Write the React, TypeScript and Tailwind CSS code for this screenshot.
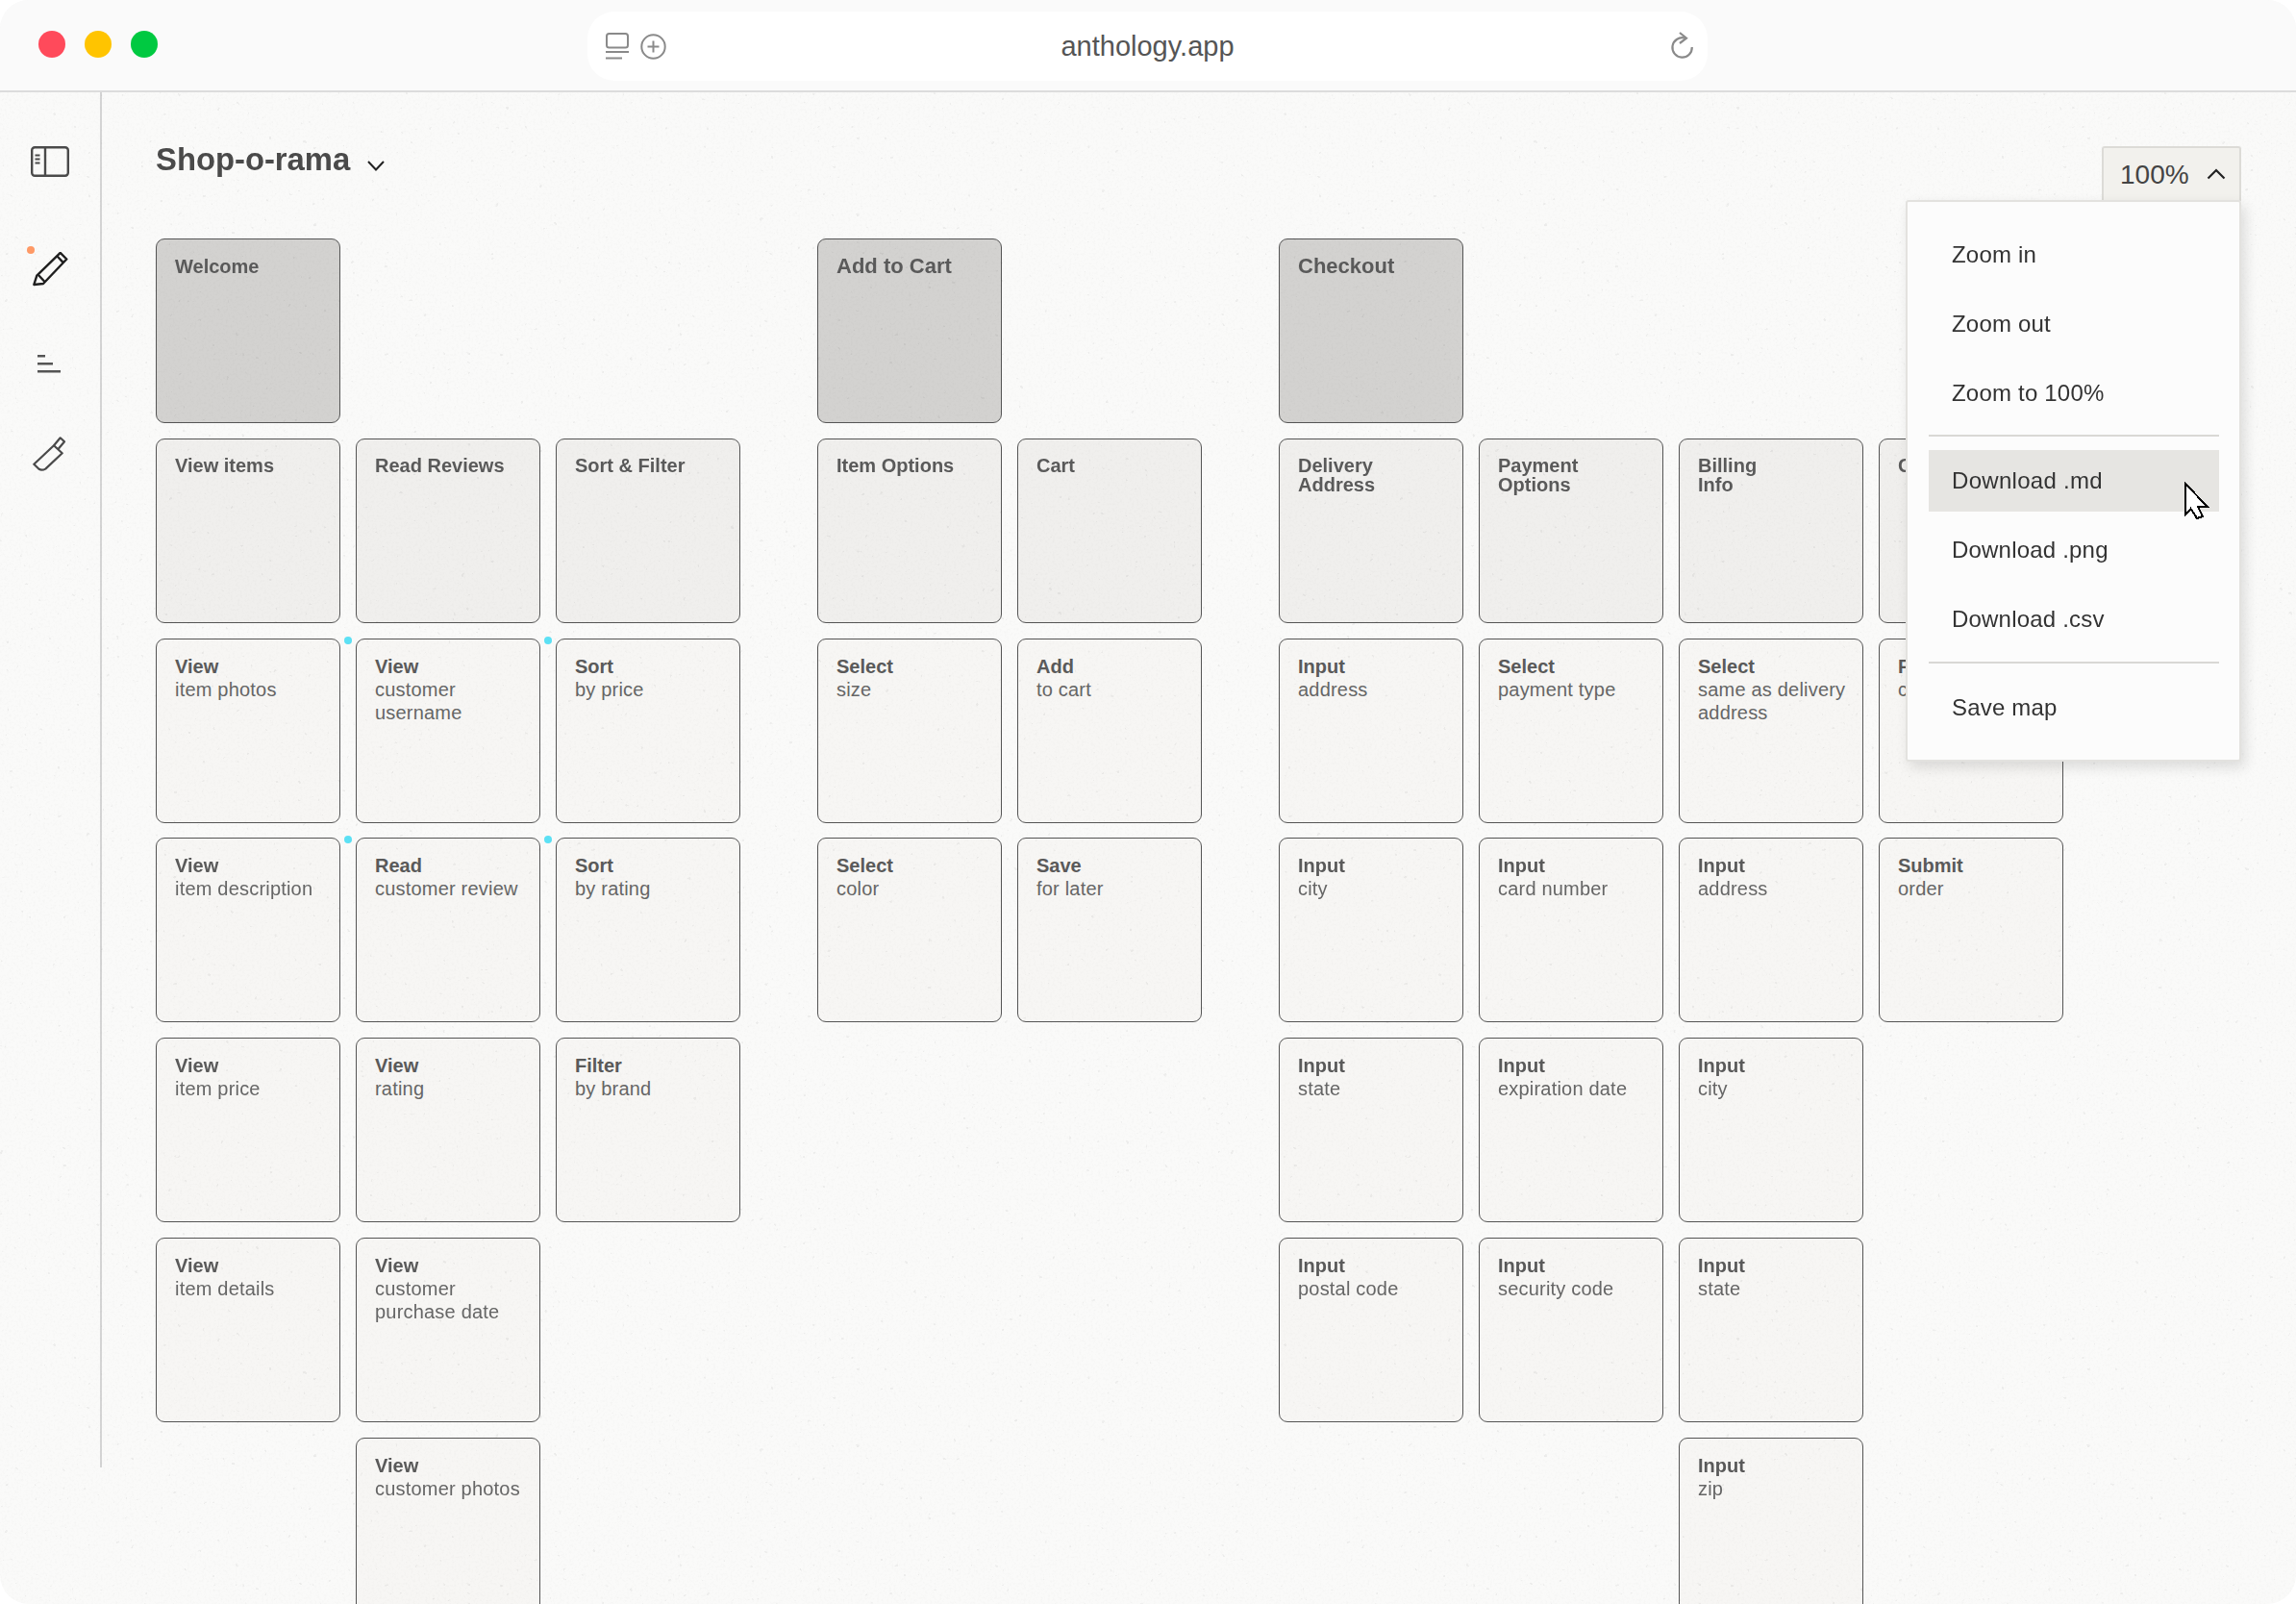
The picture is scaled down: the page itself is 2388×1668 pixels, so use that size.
import React from "react";

type Item = { title: string; lines?: string[]; dot?: boolean };
type Section = { title: string; large?: boolean; columns: { group: string[]; items: Item[] }[] };

const sections: Section[] = [
  {
    title: "Welcome",
    columns: [
      {
        group: ["View items"],
        items: [
          { title: "View", lines: ["item photos"] },
          { title: "View", lines: ["item description"] },
          { title: "View", lines: ["item price"] },
          { title: "View", lines: ["item details"] },
        ],
      },
      {
        group: ["Read Reviews"],
        items: [
          { title: "View", lines: ["customer", "username"], dot: true },
          { title: "Read", lines: ["customer review"], dot: true },
          { title: "View", lines: ["rating"] },
          { title: "View", lines: ["customer", "purchase date"] },
          { title: "View", lines: ["customer photos"] },
        ],
      },
      {
        group: ["Sort & Filter"],
        items: [
          { title: "Sort", lines: ["by price"], dot: true },
          { title: "Sort", lines: ["by rating"], dot: true },
          { title: "Filter", lines: ["by brand"] },
        ],
      },
    ],
  },
  {
    title: "Add to Cart",
    large: true,
    columns: [
      {
        group: ["Item Options"],
        items: [
          { title: "Select", lines: ["size"] },
          { title: "Select", lines: ["color"] },
        ],
      },
      {
        group: ["Cart"],
        items: [
          { title: "Add", lines: ["to cart"] },
          { title: "Save", lines: ["for later"] },
        ],
      },
    ],
  },
  {
    title: "Checkout",
    large: true,
    columns: [
      {
        group: ["Delivery", "Address"],
        items: [
          { title: "Input", lines: ["address"] },
          { title: "Input", lines: ["city"] },
          { title: "Input", lines: ["state"] },
          { title: "Input", lines: ["postal code"] },
        ],
      },
      {
        group: ["Payment", "Options"],
        items: [
          { title: "Select", lines: ["payment type"] },
          { title: "Input", lines: ["card number"] },
          { title: "Input", lines: ["expiration date"] },
          { title: "Input", lines: ["security code"] },
        ],
      },
      {
        group: ["Billing", "Info"],
        items: [
          { title: "Select", lines: ["same as delivery", "address"] },
          { title: "Input", lines: ["address"] },
          { title: "Input", lines: ["city"] },
          { title: "Input", lines: ["state"] },
          { title: "Input", lines: ["zip"] },
        ],
      },
      {
        group: ["Confirm"],
        items: [
          { title: "Finalize", lines: ["checkout"] },
          { title: "Submit", lines: ["order"] },
        ],
      },
    ],
  },
];

function SectionCard({ title, large }: { title: string; large?: boolean }) {
  return (
    <div className="h-[192px] w-[192px] rounded-[9px] border border-[#555] bg-[#d3d2d0] px-[19px] pt-[15px]">
      <div className={large ? "text-[22px] leading-[26px] font-bold text-[#5a5a5a]" : "text-[20px] leading-[26px] font-bold text-[#5a5a5a]"}>
        {title}
      </div>
    </div>
  );
}

function GroupCard({ lines }: { lines: string[] }) {
  return (
    <div className="h-[192px] w-[192px] rounded-[9px] border border-[#555] bg-[#f0efed] px-[19px] pt-[17px]">
      {lines.map((l) => (
        <div key={l} className="text-[20px] leading-[20px] font-bold text-[#5a5a5a]">
          {l}
        </div>
      ))}
    </div>
  );
}

function ItemCard({ item }: { item: Item }) {
  return (
    <div className="relative h-[192px] w-[192px] rounded-[9px] border border-[#555] bg-[#f7f6f4] px-[19px] pt-[16px] text-[20px] leading-[24px] text-[#666]">
      {item.dot && <div className="absolute -top-[3px] -left-[13px] h-2 w-2 rounded-full bg-[#5ce1f5]" />}
      <div className="font-bold text-[#5a5a5a]">{item.title}</div>
      {item.lines?.map((l) => (
        <div key={l} className="whitespace-nowrap tracking-[0.2px]">
          {l}
        </div>
      ))}
    </div>
  );
}

function PanelIcon() {
  return (
    <svg width="40" height="32" viewBox="0 0 40 32" fill="none" stroke="#4a4a4a" strokeWidth="2.4">
      <rect x="1.2" y="1.2" width="37.6" height="29.6" rx="3" />
      <path d="M15 1v30" />
      <path d="M4.5 9.5h5M4.5 13.5h5M4.5 17.5h5" strokeWidth="2" />
    </svg>
  );
}

function PencilIcon() {
  return (
    <svg width="40" height="36" viewBox="0 0 40 36" fill="none" stroke="#1f1f1f" strokeWidth="2.4" strokeLinejoin="round">
      <path d="M3.3 34L6.3 24.7L30.7.9L37.3 7.500L13 33Z" />
      <path d="M27.3 4.200L33.600 10.900" />
      <path d="M8 24l6.500 7" />
    </svg>
  );
}

function LinesIcon() {
  return (
    <svg width="40" height="22" viewBox="0 0 40 22" fill="none" stroke="#555" strokeWidth="2.4">
      <path d="M7 2.3h8M7 10.3h16M7 18.3h24" />
    </svg>
  );
}

function KnifeIcon() {
  return (
    <svg width="40" height="36" viewBox="0 0 40 36" fill="none" stroke="#4a4a4a" strokeWidth="2.2" strokeLinejoin="round">
      <path d="M3.3 28.7L24 9.3L32.7 17.3L15.3 33.6Q11.5 35.6 8.5 33.8Z" />
      <path d="M24 9.3L30.7 1.3L35 5.3L28.5 13" />
    </svg>
  );
}

function TabsIcon() {
  return (
    <svg width="24" height="28" viewBox="0 0 24 28" fill="none" stroke="#8a8a8a" strokeWidth="2">
      <rect x="1" y="1" width="22" height="14.500" rx="2.500" />
      <path d="M0 20h24M0 26.500h17" />
    </svg>
  );
}

function PlusCircleIcon() {
  return (
    <svg width="27" height="27" viewBox="0 0 27 27" fill="none" stroke="#8a8a8a" strokeWidth="2">
      <circle cx="13.5" cy="13.5" r="12.2" />
      <path d="M13.5 7.500v12M7.500 13.500h12" />
    </svg>
  );
}

function ReloadIcon() {
  return (
    <svg width="26" height="30" viewBox="0 0 26 30" fill="none" stroke="#8a8a8a" strokeWidth="2.2">
      <path d="M15 6.500A10.200 10.200 0 1 0 22.800 16" />
      <path d="M10 1L17 6.700L10 12" />
    </svg>
  );
}

function MenuItem({ label, active }: { label: string; active?: boolean }) {
  return (
    <div className={active ? "flex h-16 items-center bg-[#e6e5e2] pl-6 tracking-[0.3px]" : "flex h-16 items-center pl-6"}>
      {label}
    </div>
  );
}

export default function App() {
  return (
    <div className="relative h-[1668px] w-[2388px] overflow-hidden rounded-[30px] bg-[#fafaf9] font-['Liberation_Sans',Arial,sans-serif]">
      {/* title bar */}
      <div className="flex h-[96px] items-center border-b-2 border-[#dcdcdc] bg-[#fafafa] pl-10">
        <div className="flex w-[571px] gap-5 pb-[2px]">
          <div className="h-7 w-7 rounded-full bg-[#ff4a5b]" />
          <div className="h-7 w-7 rounded-full bg-[#ffc400]" />
          <div className="h-7 w-7 rounded-full bg-[#00c941]" />
        </div>
        <div className="mt-[2px] grid h-[72px] w-[1165px] grid-cols-[1fr_auto_1fr] items-center rounded-[28px] bg-white px-[19px]">
          <div className="flex items-center gap-3">
            <TabsIcon />
            <PlusCircleIcon />
          </div>
          <div className="pt-[2px] text-[29px] text-[#555]">anthology.app</div>
          <div className="-mr-[6px] flex justify-end">
            <ReloadIcon />
          </div>
        </div>
      </div>

      <div className="flex">
        {/* sidebar */}
        <div className="h-[1430px] w-[106px] shrink-0 border-r-2 border-[#d4d4d4] pt-14 pl-8">
          <PanelIcon />
          <div className="relative mt-[78px]">
            <div className="absolute -top-[6px] -left-1 h-2 w-2 rounded-full bg-[#ff9a66]" />
            <PencilIcon />
          </div>
          <div className="mt-[70px]">
            <LinesIcon />
          </div>
          <div className="mt-16">
            <KnifeIcon />
          </div>
        </div>

        {/* canvas */}
        <div className="pt-[46px] pl-[56px]">
          <div className="mb-[58px] flex h-12 items-center gap-[18px]">
            <div className="text-[32.8px] font-bold text-[#4a4a4a]">Shop-o-rama</div>
            <svg className="mt-[12px]" width="18" height="11" viewBox="0 0 18 11" fill="none" stroke="#222" strokeWidth="2">
              <path d="M1 1l8 8.500L17 1" />
            </svg>
          </div>
          <div className="flex gap-20">
            {sections.map((s) => (
              <div key={s.title} className="flex flex-col gap-[15.8px]">
                <SectionCard title={s.title} large={s.large} />
                <div className="flex gap-4">
                  {s.columns.map((c) => (
                    <div key={c.group[0]} className="flex flex-col gap-[15.8px]">
                      <GroupCard lines={c.group} />
                      {c.items.map((item, i) => (
                        <ItemCard key={i} item={item} />
                      ))}
                    </div>
                  ))}
                </div>
              </div>
            ))}
          </div>
        </div>
      </div>

      {/* paper grain lies over the canvas and the cards */}
      <svg className="pointer-events-none absolute top-[96px] left-0 mix-blend-multiply" width="2388" height="1572">
        <filter id="grain" x="0" y="0" width="100%" height="100%">
          <feTurbulence type="fractalNoise" baseFrequency="0.4" numOctaves="3" seed="4" />
          <feColorMatrix values="0 0 0 0 0.6  0 0 0 0 0.6  0 0 0 0 0.59  2 0 0 0 -0.9" />
        </filter>
        <filter id="specks" x="0" y="0" width="100%" height="100%">
          <feTurbulence type="fractalNoise" baseFrequency="0.2" numOctaves="2" seed="11" />
          <feColorMatrix values="0 0 0 0 0.5  0 0 0 0 0.5  0 0 0 0 0.5  16 0 0 0 -12.2" />
        </filter>
        <rect width="2388" height="1572" filter="url(#grain)" opacity="0.1" />
        <rect width="2388" height="1572" filter="url(#specks)" opacity="0.18" />
      </svg>

      {/* zoom control */}
      <div className="absolute top-[152px] right-[57px] flex h-[57px] w-[145px] items-center gap-[18px] rounded-t-[3px] border-2 border-b-0 border-[#dcdbd7] bg-[#f2f1ed] pl-[17px] text-[28px] text-[#444]">
        100%
        <svg className="mb-[2px]" width="20" height="12" viewBox="0 0 20 12" fill="none" stroke="#222" strokeWidth="2.200">
          <path d="M1.500 10.500L10 2l8.500 8.500" />
        </svg>
      </div>

      {/* zoom menu */}
      <div className="absolute top-[208px] right-[57px] h-[584px] w-[349px] rounded-[3px] border-2 border-[#e3e2df] bg-[#fcfcfc] pt-[23px] pr-[21px] pl-[22px] text-[24px] tracking-[0.2px] text-[#333] shadow-[4px_6px_14px_rgba(0,0,0,0.12)]">
        <div className="flex flex-col gap-2">
          <MenuItem label="Zoom in" />
          <MenuItem label="Zoom out" />
          <MenuItem label="Zoom to 100%" />
        </div>
        <div className="mt-[11px] mb-[14px] h-0.5 bg-[#d9d8d5]" />
        <div className="flex flex-col gap-2">
          <MenuItem label="Download .md" active />
          <MenuItem label="Download .png" />
          <MenuItem label="Download .csv" />
        </div>
        <div className="mt-3 mb-[14px] h-0.5 bg-[#d9d8d5]" />
        <MenuItem label="Save map" />
      </div>

      {/* mouse pointer */}
      <svg className="absolute top-[500px] left-[2270px]" width="30" height="42" viewBox="0 0 30 42" shapeRendering="crispEdges">
        <path d="M3 3V35L8.500 29L15 39L21 37L16 27H26Z" fill="#fff" stroke="#000" strokeWidth="2" />
      </svg>
    </div>
  );
}
